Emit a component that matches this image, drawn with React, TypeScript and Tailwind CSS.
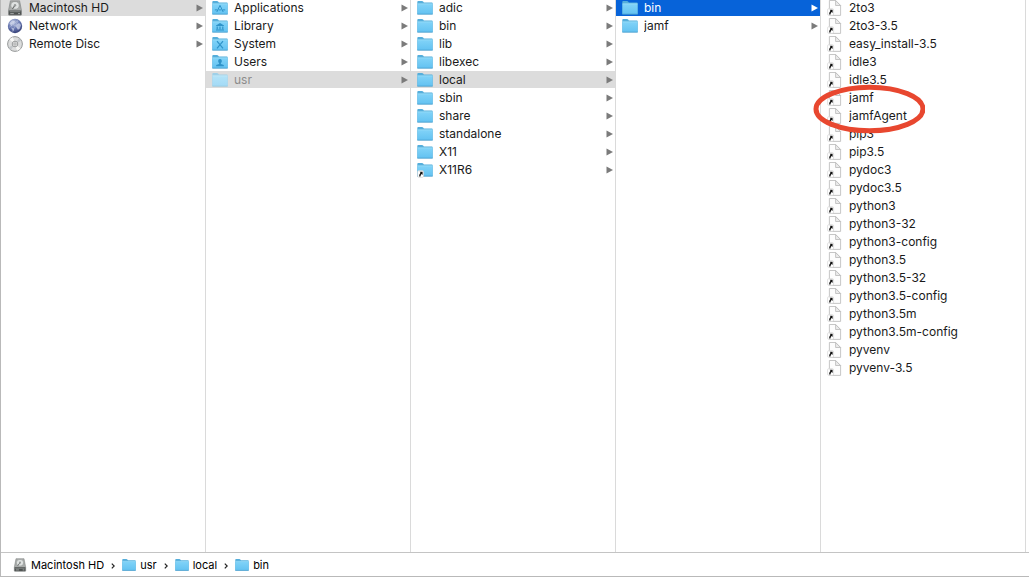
import { useId } from 'react';
import clsx from 'clsx';

type Glyph = 'apps' | 'library' | 'system' | 'users';
type IconKind = 'drive' | 'network' | 'disc' | 'folder' | 'file';
type Selection = 'active' | 'path';

interface Entry {
  name: string;
  icon?: IconKind;
  glyph?: Glyph;
  alias?: boolean;
  dimmed?: boolean;
  leaf?: boolean;
  selected?: Selection;
}

const file = (name: string): Entry => ({ name, icon: 'file', alias: true, leaf: true });

const COLUMNS: { label: string; entries: Entry[] }[] = [
  {
    label: 'Computer',
    entries: [
      { name: 'Macintosh HD', icon: 'drive', selected: 'path' },
      { name: 'Network', icon: 'network' },
      { name: 'Remote Disc', icon: 'disc' },
    ],
  },
  {
    label: 'Macintosh HD',
    entries: [
      { name: 'Applications', glyph: 'apps' },
      { name: 'Library', glyph: 'library' },
      { name: 'System', glyph: 'system' },
      { name: 'Users', glyph: 'users' },
      { name: 'usr', dimmed: true, selected: 'path' },
    ],
  },
  {
    label: 'usr',
    entries: [
      { name: 'adic' },
      { name: 'bin' },
      { name: 'lib' },
      { name: 'libexec' },
      { name: 'local', selected: 'path' },
      { name: 'sbin' },
      { name: 'share' },
      { name: 'standalone' },
      { name: 'X11' },
      { name: 'X11R6', alias: true },
    ],
  },
  {
    label: 'local',
    entries: [{ name: 'bin', selected: 'active' }, { name: 'jamf' }],
  },
  {
    label: 'bin',
    entries: [
      '2to3',
      '2to3-3.5',
      'easy_install-3.5',
      'idle3',
      'idle3.5',
      'jamf',
      'jamfAgent',
      'pip3',
      'pip3.5',
      'pydoc3',
      'pydoc3.5',
      'python3',
      'python3-32',
      'python3-config',
      'python3.5',
      'python3.5-32',
      'python3.5-config',
      'python3.5m',
      'python3.5m-config',
      'pyvenv',
      'pyvenv-3.5',
    ].map(file),
  },
];

const PATH: { name: string; icon: IconKind }[] = [
  { name: 'Macintosh HD', icon: 'drive' },
  { name: 'usr', icon: 'folder' },
  { name: 'local', icon: 'folder' },
  { name: 'bin', icon: 'folder' },
];

function FolderGlyph({ glyph }: { glyph: Glyph }) {
  const stroke = { fill: 'none', stroke: '#2f93c9', strokeWidth: 1 };
  switch (glyph) {
    case 'apps':
      return <path d="M4.800 12 8 5.400l3.200 6.600M2.800 9.900h2.400M6.600 9.900h2.800M10.800 9.900h2.400" {...stroke} />;
    case 'library':
      return (
        <path
          d="M4 7.400 8 5l4 2.400v.6H4zM4.600 8.400h1.200v2.800H4.600zM7.400 8.400h1.200v2.800H7.400zM10.200 8.400h1.200v2.800h-1.200zM4 11.400h8v1H4z"
          fill="#2f93c9"
        />
      );
    case 'system':
      return <path d="m5 5.200 6 7.200M11 5.200l-6 7.200" {...stroke} strokeWidth={1.2} />;
    case 'users':
      return (
        <path
          d="M8 5c1.200 0 1.800.8 1.800 2 0 1-.4 1.600-.9 2v.9l2.900 1.100v1.200H4.200V11l2.900-1.100V9c-.5-.4-.9-1-.9-2 0-1.200.6-2 1.800-2z"
          fill="#2f93c9"
        />
      );
  }
}

function FolderIcon({ glyph, dimmed }: { glyph?: Glyph; dimmed?: boolean }) {
  const id = useId();
  return (
    <>
      <defs>
        <linearGradient id={id} x1="0" y1="0" x2="0" y2="1">
          <stop offset="0" stopColor={dimmed ? '#b3e3f8' : '#81d3f8'} />
          <stop offset="1" stopColor={dimmed ? '#a3daf6' : '#63c2f1'} />
        </linearGradient>
      </defs>
      <path d="M.3 14V2q0-.9.9-.9h3.900q.6 0 1 .5l.8.9h8q.8 0 .8.8V14z" fill={dimmed ? '#9fd0e8' : '#55aedb'} />
      <path d="M.5 3.900h15v10.200H.5z" fill={`url(#${id})`} />
      <path d="M.5 3.800h15" stroke={dimmed ? '#c9edfb' : '#a3e2fc'} strokeWidth=".7" />
      <path d="M.3 14.200h15.400" stroke={dimmed ? '#98c8e0' : '#4a9fce'} strokeWidth=".9" />
      {glyph && <FolderGlyph glyph={glyph} />}
    </>
  );
}

function DriveIcon() {
  return (
    <>
      <path d="M3.400.8h9.200l1.900 9.700v4q0 .8-.8.8H2.300q-.8 0-.8-.8v-4z" fill="#a9acab" stroke="#7b7e7d" strokeWidth=".6" />
      <ellipse cx="8" cy="5.400" rx="4.200" ry="3.900" fill="#dfe2e1" stroke="#858887" strokeWidth=".6" />
      <path d="M8 5.400 5.400 8.800" stroke="#6a6d6c" strokeWidth="1.100" />
      <circle cx="8" cy="5.300" r="1.200" fill="#979b9a" />
      <path d="M1.800 10.500h12.400v4.300H1.800z" fill="#4d5150" />
      <path d="M2.600 11.200h10.800v1H2.600z" fill="#868a89" />
      <path d="M3.300 13.600h3.500M11 13.600h2" stroke="#b9bdbc" strokeWidth=".8" />
    </>
  );
}

function NetworkIcon() {
  const id = useId();
  return (
    <>
      <defs>
        <radialGradient id={id} cx=".4" cy=".25" r=".8">
          <stop offset="0" stopColor="#b4c0de" />
          <stop offset=".55" stopColor="#6676b0" />
          <stop offset="1" stopColor="#303a70" />
        </radialGradient>
      </defs>
      <circle cx="8" cy="8" r="7.200" fill={`url(#${id})`} />
      <path
        d="M2.500 5.500 5 2.500l3 .5-1 2.500-2 .5-.5 2.500zM9 7l3-2 2 2-1 3-2 2-1.500-2.500zM4 9.500l3 1-.5 3z"
        fill="#d8dff0"
        opacity=".65"
      />
      <path d="M3 4.500 13 11M2 9.500l9-7M5 14l6-11" stroke="#e8edfa" strokeWidth=".4" opacity=".7" />
    </>
  );
}

function DiscIcon() {
  return (
    <>
      <circle cx="8" cy="8" r="7.400" fill="#dcdddd" stroke="#8c8e8e" strokeWidth=".9" />
      <path d="M8 8 2.500 3.500A7 7 0 0 1 6 1.300zM8 8l5.500 4.500A7 7 0 0 1 10 14.700z" fill="#f7f7f5" />
      <path d="m8 8 4-5.800a7 7 0 0 1 2.300 2.600zM8 8l-4 5.800a7 7 0 0 1-2.300-2.600z" fill="#c3c7ca" />
      <circle cx="8" cy="8" r="2.800" fill="#eee" stroke="#8f9191" strokeWidth=".9" />
      <circle cx="8" cy="8" r="1.200" fill="#fff" stroke="#7d7f7f" strokeWidth=".7" />
    </>
  );
}

function FileIcon() {
  return (
    <g fill="#fdfdfd" stroke="#b8b8b8" strokeWidth=".8">
      <path d="M2.400.5h6.200l5 5v9.900H2.400z" />
      <path d="M8.600.5v5h5z" fill="#ececec" />
    </g>
  );
}

function AliasBadge() {
  return (
    <>
      <rect x=".6" y="8.600" width="6" height="6.800" rx="1.400" fill="#fff" stroke="#c4c4c4" strokeWidth=".5" />
      <path d="M2.600 9.800h3v3.100l-1-1q-1.100.8-1.100 2.500H2.100q-.1-2.200 1.400-3.700z" fill="#111" />
    </>
  );
}

type EntryIconProps = Pick<Entry, 'icon' | 'glyph' | 'alias' | 'dimmed'> & { className?: string };

function EntryIcon({ icon = 'folder', glyph, alias, dimmed, className }: EntryIconProps) {
  return (
    <svg viewBox="0 0 16 16" className={clsx('shrink-0', className)} aria-hidden="true">
      {icon === 'folder' && <FolderIcon glyph={glyph} dimmed={dimmed} />}
      {icon === 'drive' && <DriveIcon />}
      {icon === 'network' && <NetworkIcon />}
      {icon === 'disc' && <DiscIcon />}
      {icon === 'file' && <FileIcon />}
      {alias && <AliasBadge />}
    </svg>
  );
}

function Row({ entry }: { entry: Entry }) {
  const active = entry.selected === 'active';
  return (
    <li>
      <button
        type="button"
        aria-current={entry.selected ? 'true' : undefined}
        className={clsx(
          'flex h-[18px] w-full items-center gap-1.5 border-t border-transparent bg-clip-padding pr-0.5 pl-1.5 text-left text-[12px] leading-4',
          active && 'bg-[#0763d9] text-white',
          entry.selected === 'path' && 'bg-[#dcdcdc]',
          entry.dimmed && 'text-[#8c8c8c]',
        )}
      >
        <EntryIcon
          icon={entry.icon}
          glyph={entry.glyph}
          alias={entry.alias}
          dimmed={entry.dimmed}
          className="size-4"
        />
        <span className="min-w-0 flex-1 truncate">{entry.name}</span>
        {!entry.leaf && (
          <svg
            viewBox="0 0 7 8"
            className={clsx('h-2 w-[7px] shrink-0', active ? 'text-white' : 'text-[#7b7b7b]')}
            aria-hidden="true"
          >
            <path d="M.5.500 7 4 .5 7.500z" fill="currentColor" />
          </svg>
        )}
      </button>
    </li>
  );
}

function Highlight() {
  return (
    <svg
      viewBox="0 0 112 50"
      className="pointer-events-none absolute top-[84px] -left-2 h-[50px] w-28"
      aria-hidden="true"
    >
      <ellipse cx="56.500" cy="25" rx="53.500" ry="21.800" fill="none" stroke="#e8472f" strokeWidth="5" />
    </svg>
  );
}

export default function App() {
  return (
    <main className="flex h-screen flex-col border-b border-l border-[#b9b9b9] bg-white font-[Inter,'Liberation_Sans',sans-serif] text-[#1a1a1a]">
      <div className="grid min-h-0 flex-1 grid-cols-5 pr-[3px]">
        {COLUMNS.map((column) => (
          <section key={column.label} aria-label={column.label} className="relative min-w-0 border-r border-[#dadada]">
            <div className="h-full overflow-hidden">
              <ul className="-mt-0.5">
                {column.entries.map((entry) => (
                  <Row key={entry.name} entry={entry} />
                ))}
              </ul>
            </div>
            {column.label === 'bin' && <Highlight />}
          </section>
        ))}
      </div>
      <nav aria-label="Path" className="border-t border-[#c4c4c4] pl-3">
        <ol className="flex h-[23px] items-center gap-[7px] text-[11px] leading-4 text-black">
          {PATH.map((item, i) => (
            <li key={item.name} className="flex items-center gap-[7px]">
              {i > 0 && (
                <svg viewBox="0 0 4 6" className="mt-0.5 h-1.5 w-1 shrink-0" aria-hidden="true">
                  <path d="m.8.6 2.400 2.400L.8 5.400" fill="none" stroke="#222" strokeWidth="1.200" />
                </svg>
              )}
              <button type="button" className="flex items-center gap-1">
                <EntryIcon icon={item.icon} className="size-3.5" />
                {item.name}
              </button>
            </li>
          ))}
        </ol>
      </nav>
    </main>
  );
}
